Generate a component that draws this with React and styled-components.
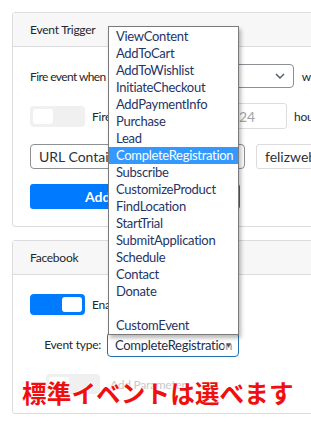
import React from 'react';
import styled, { createGlobalStyle } from 'styled-components';

const GlobalStyle = createGlobalStyle`
  html, body {
    margin: 0;
    padding: 0;
    overflow: hidden;
    background: #fff;
  }
  body {
    font-family: Lato, "Open Sans", sans-serif;
    color: #23282d;
  }
`;

const Page = styled.div`
  position: relative;
  width: 460px;
  padding: 12px;
  display: flex;
  flex-direction: column;
  gap: 13px;
`;

const Card = styled.div`
  border: 1px solid #dcdcde;
  border-radius: 3px;
  background: #fff;
`;

const CardHeader = styled.div`
  height: 33px;
  padding: 0 17px;
  display: flex;
  align-items: center;
  background: #f7f7f7;
  border-bottom: 1px solid #dcdcde;
  font-size: 12px;
  letter-spacing: -0.25px;
`;

const CardBody = styled.div`
  padding: ${({ pad }) => pad};
  display: flex;
  flex-direction: column;
  gap: ${({ gap }) => gap};
`;

const Row = styled.div`
  display: flex;
  align-items: center;
  gap: ${({ gap }) => gap || '7px'};
`;

const Label = styled.span`
  font-size: 12px;
  letter-spacing: ${({ tight }) => (tight ? '-0.6px' : '-0.25px')};
  white-space: nowrap;
  flex: 0 0 ${({ w }) => w || 'auto'};
  text-align: ${({ align }) => align || 'left'};
  color: ${({ faint }) => (faint ? '#c9c9c9' : '#23282d')};
`;

const Select = styled.div`
  position: relative;
  box-sizing: border-box;
  flex: 0 0 ${({ w }) => w};
  height: ${({ h }) => h || '24px'};
  display: flex;
  align-items: center;
  justify-content: space-between;
  padding: 0 8px;
  border: 1px solid #8c8f94;
  border-radius: 4px;
  font-size: 14px;
  color: #2c3338;
  background: #fff;
  white-space: nowrap;
`;

const Input = styled.div`
  position: relative;
  box-sizing: border-box;
  flex: 0 0 ${({ w }) => w};
  height: ${({ h }) => h || '26px'};
  display: flex;
  align-items: center;
  padding: 0 8px;
  border: 1px solid #dcdcde;
  border-radius: 3px;
  font-size: 14px;
  background: #fff;
  color: ${({ placeholder }) => (placeholder ? '#a0a5aa' : '#2c3338')};
  white-space: nowrap;
  overflow: hidden;
`;

const Toggle = styled.div`
  box-sizing: border-box;
  flex: 0 0 ${({ w }) => w || '55px'};
  height: ${({ h }) => h || '21px'};
  border-radius: 4px;
  padding: 3px;
  display: flex;
  justify-content: ${({ on }) => (on ? 'flex-end' : 'flex-start')};
  background: ${({ on }) => (on ? '#007bff' : '#f0f0f1')};
  margin-left: ${({ ml }) => ml || '0'};
`;

const Knob = styled.div`
  width: 20px;
  height: 100%;
  border-radius: 3px;
  background: #fff;
`;

const Button = styled.button`
  width: 210px;
  height: 25px;
  border: none;
  border-radius: 3px;
  background: #007bff;
  color: #fff;
  font-family: inherit;
  font-size: 14px;
  font-weight: 700;
  text-align: left;
  padding: 0 0 0 55px;
`;

const Dropdown = styled.ul`
  position: absolute;
  left: 108px;
  top: 26px;
  width: 131px;
  box-sizing: border-box;
  margin: 0;
  padding: 1px 0 0;
  list-style: none;
  background: #fff;
  border: 1px solid #7a7a7a;
  box-shadow: 2px 3px 4px rgba(0, 0, 0, 0.28);
  z-index: 5;
`;

const Option = styled.li`
  height: 17px;
  line-height: 17px;
  padding-left: 7px;
  font-size: 13px;
  letter-spacing: -0.3px;
  white-space: nowrap;
  overflow: hidden;
  color: ${({ active }) => (active ? '#fff' : '#1f3566')};
  background: ${({ active }) => (active ? '#3399ff' : 'transparent')};
`;

const TypeSelect = styled.div`
  box-sizing: border-box;
  width: 132px;
  height: 25px;
  position: relative;
  display: flex;
  align-items: center;
  padding-left: 7px;
  border: 1.5px solid #2271b1;
  border-radius: 4px;
  font-size: 13px;
  letter-spacing: -0.3px;
  color: #1d2f4c;
  white-space: nowrap;
  overflow: hidden;
`;

const Arrow = styled.span`
  position: absolute;
  right: 6px;
  top: 7px;
  font-size: 8px;
  color: #555;
  background: rgba(255, 255, 255, 0.5);
`;

const Note = styled.div`
  position: absolute;
  left: 22px;
  top: 375px;
  font-family: "Noto Sans CJK JP", sans-serif;
  font-size: 24.5px;
  font-weight: 700;
  letter-spacing: 0.2px;
  color: #f00f0f;
  white-space: nowrap;
  text-shadow: 0 0 2px #fff, 0 0 2px #fff;
  z-index: 6;
`;

const Chevron = () => (
  <svg width="10" height="6" viewBox="0 0 10 6" fill="none">
    <path d="M1 1l4 4 4-4" stroke="#50575e" strokeWidth="1.4" />
  </svg>
);

const events = [
  'ViewContent', 'AddToCart', 'AddToWishlist', 'InitiateCheckout', 'AddPaymentInfo',
  'Purchase', 'Lead', 'CompleteRegistration', 'Subscribe', 'CustomizeProduct',
  'FindLocation', 'StartTrial', 'SubmitApplication', 'Schedule', 'Contact', 'Donate',
  '', 'CustomEvent',
];

export default function App() {
  return (
    <>
      <GlobalStyle />
      <Page>
        <Card>
          <CardHeader>Event Trigger</CardHeader>
          <CardBody pad="17px" gap="15px">
            <Row gap="8px">
              <Label w="74px" tight>Fire event when</Label>
              <Select w="180px">
                <span>page loads</span>
                <Chevron />
              </Select>
              <Label>within</Label>
            </Row>
            <Row>
              <Toggle><Knob /></Toggle>
              <Label w="131px">Fire event once in</Label>
              <Input w="57px" placeholder>24</Input>
              <Label>hours</Label>
            </Row>
            <Row gap="11px">
              <Select w="215px" h="25px">
                <span>URL Contains</span>
                <Chevron />
              </Select>
              <Input w="120px" h="25px">felizweb.com</Input>
            </Row>
            <Button>Add Condition</Button>
          </CardBody>
        </Card>
        <Card>
          <CardHeader>Facebook</CardHeader>
          <CardBody pad="19px 17px" gap="17px">
            <Row>
              <Toggle on><Knob /></Toggle>
              <Label>Enable</Label>
            </Row>
            <Row gap="6px">
              <Label w="71px" align="right">Event type:</Label>
              <TypeSelect>
                CompleteRegistration
                <Arrow>▼</Arrow>
              </TypeSelect>
            </Row>
            <Row gap="10px">
              <Toggle ml="16px" w="54px" h="20px"><Knob /></Toggle>
              <Label faint>Add Parameter</Label>
            </Row>
          </CardBody>
        </Card>
        <Dropdown>
          {events.map((e, i) => (
            <Option key={i} active={e === 'CompleteRegistration'}>{e || '\u00a0'}</Option>
          ))}
        </Dropdown>
        <Note>標準イベントは選べます</Note>
      </Page>
    </>
  );
}
